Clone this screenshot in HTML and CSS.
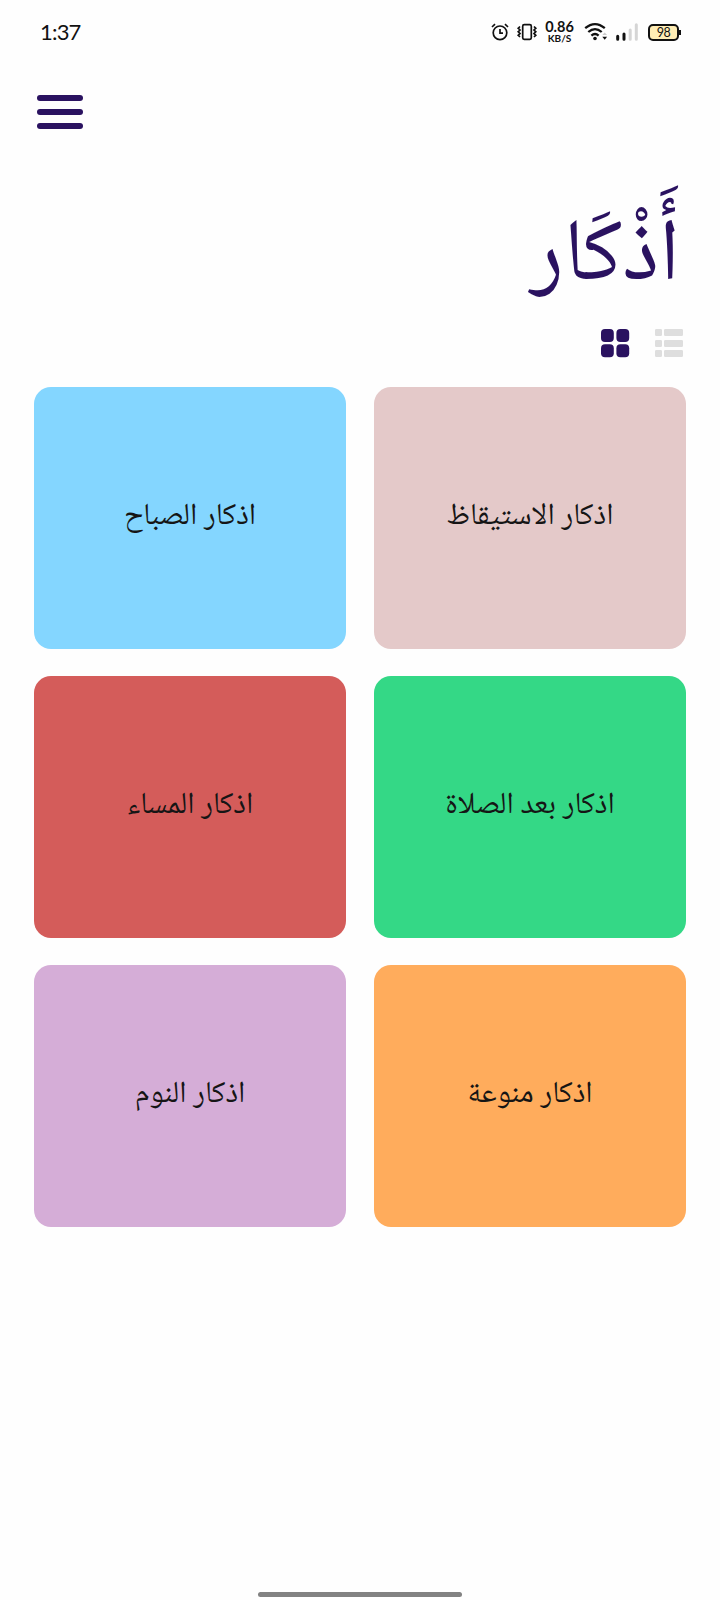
FILE: index.html
```html
<!DOCTYPE html>
<html lang="ar">
<head>
  <meta charset="utf-8">
  <title>أذكار</title>
  <link rel="stylesheet" href="styles.css">
</head>
<body>
  <div class="status-bar">
    <span class="time">1:37</span>
    <div class="status-icons">
      <svg class="alarm" width="18" height="18" viewBox="0 0 18 18">
        <circle cx="9" cy="9.8" r="6.8"/>
        <path d="M9 6v4.2h3M1 4l3-2.8M17 4l-3-2.8"/>
      </svg>
      <svg class="vibrate" width="20" height="18" viewBox="0 0 20 18">
        <rect x="5.7" y="1.7" width="8.6" height="14.6" rx="1.5"/>
        <path d="M3 3.5L1.2 5.3 3 7 1.2 8.8 3 10.5 1.2 12.3 3 14M17 3.5l1.8 1.8L17 7l1.8 1.8L17 10.5l1.8 1.8L17 14"/>
      </svg>
      <div class="speed">
        <span class="rate">0.86</span>
        <span class="unit">KB/S</span>
      </div>
      <svg class="wifi" width="24" height="18" viewBox="0 0 24 18">
        <path d="M1.2 5.2Q11 -3 20.8 5.2M4.3 9Q11 3.2 17.7 9M7.4 12.6Q11 9.4 14.6 12.6"/>
        <circle class="fill" cx="11" cy="15.5" r="1.8"/>
        <path class="faint" d="M18.3 12l2.4-2.4 2.4 2.4z"/>
        <path class="fill" d="M18.3 13.8h4.8l-2.4 3z"/>
      </svg>
      <svg class="signal" width="22" height="18" viewBox="0 0 22 18">
        <path d="M1.7 13.3v3M8 11v5.3"/>
        <path class="weak" d="M14.2 7v9.3M20.3 1.7v14.6"/>
      </svg>
      <div class="battery">98</div>
    </div>
  </div>

  <header>
    <button class="menu" aria-label="القائمة">
      <span></span>
      <span></span>
      <span></span>
    </button>
  </header>

  <main dir="rtl">
    <h1>أَذْكَار</h1>

    <div class="views">
      <svg class="list" width="28" height="28" viewBox="0 0 28 28">
        <rect width="7" height="7" rx="1.2"/>
        <rect x="9" width="19" height="7" rx="1.2"/>
        <rect y="11" width="7" height="7" rx="1.2"/>
        <rect x="9" y="11" width="19" height="7" rx="1.2"/>
        <rect y="21" width="7" height="7" rx="1.2"/>
        <rect x="9" y="21" width="19" height="7" rx="1.2"/>
      </svg>
      <svg class="tiles" width="28" height="28" viewBox="0 0 28 28">
        <rect width="12.8" height="13" rx="4"/>
        <rect x="15.4" width="12.8" height="13" rx="4"/>
        <rect y="15.2" width="12.8" height="13" rx="4"/>
        <rect x="15.4" y="15.2" width="12.8" height="13" rx="4"/>
      </svg>
    </div>

    <div class="grid">
      <a class="card waking">اذكار الاستيقاظ</a>
      <a class="card morning">اذكار الصباح</a>
      <a class="card prayer">اذكار بعد الصلاة</a>
      <a class="card evening">اذكار المساء</a>
      <a class="card various">اذكار منوعة</a>
      <a class="card sleep">اذكار النوم</a>
    </div>
  </main>

  <div class="home-bar"></div>
</body>
</html>
```
FILE: styles.css
```css
* {
  box-sizing: border-box;
}

body {
  margin: 0;
  height: 1600px;
  display: flex;
  flex-direction: column;
  background-color: #fefefe;
  font-family: "Noto Naskh Arabic", "Noto Sans Arabic", "Noto Sans", sans-serif;
  overflow: hidden;
}

svg {
  display: block;
  overflow: visible;
}

.status-bar {
  height: 64px;
  padding: 0 41px 0 40px;
  display: flex;
  align-items: center;
  justify-content: space-between;
  color: #111;
}

.time {
  padding-bottom: 2px;
  font: 22px Lato, sans-serif;
  letter-spacing: -0.8px;
}

.status-icons {
  display: flex;
  align-items: center;
}

.status-icons svg {
  fill: none;
  stroke: #111;
  stroke-width: 1.7;
}

.status-icons .fill {
  fill: #111;
  stroke: none;
}

.status-icons .faint {
  fill: #ccc;
  stroke: none;
}

.vibrate {
  margin-left: 8px;
}

.speed {
  width: 31px;
  margin-left: 7px;
  display: flex;
  flex-direction: column;
  align-items: center;
  font-family: Lato, sans-serif;
  font-weight: bold;
}

.rate {
  font-size: 14.5px;
  line-height: 12px;
}

.unit {
  font-size: 10px;
  line-height: 10px;
}

.wifi {
  margin-left: 9px;
}

.status-icons .wifi {
  stroke-width: 2.3;
}

.signal {
  margin-left: 8px;
}

.status-icons .signal {
  stroke-width: 3;
  stroke-linecap: round;
}

.signal .weak {
  stroke: #d5d5d5;
}

.battery {
  position: relative;
  width: 31px;
  height: 17px;
  margin-left: 10px;
  border: 2px solid #111;
  border-radius: 5px;
  background-color: #ffedb5;
  font: 12.5px/13px Lato, sans-serif;
  letter-spacing: -0.5px;
  text-align: center;
}

.battery::after {
  content: "";
  position: absolute;
  right: -4px;
  top: 4px;
  width: 2px;
  height: 5px;
  background-color: #111;
}

header {
  height: 96px;
  padding: 31px 37px 0;
}

.menu {
  width: 46px;
  padding: 0;
  border: none;
  background: none;
  display: flex;
  flex-direction: column;
  gap: 8px;
}

.menu span {
  width: 100%;
  height: 6px;
  border-radius: 3px;
  background-color: #2a1260;
}

main {
  padding: 0 34px;
}

h1 {
  height: 169px;
  margin: 0;
  padding: 31px 6px 0;
  display: flex;
  align-items: center;
  color: #2a1260;
  font-size: 88px;
  font-weight: normal;
  line-height: 1;
}

.views {
  height: 58px;
  padding-right: 3px;
  display: flex;
  gap: 26px;
}

.list {
  fill: #dedede;
}

.tiles {
  fill: #2a1260;
}

.grid {
  display: grid;
  grid-template-columns: 1fr 1fr;
  grid-auto-rows: 262px;
  gap: 27px 28px;
}

.card {
  padding-bottom: 2px;
  display: flex;
  align-items: center;
  justify-content: center;
  border-radius: 17px;
  color: #151515;
  font-size: 30.5px;
}

.waking {
  background-color: #e4c9c9;
}

.morning {
  background-color: #84d6ff;
}

.prayer {
  background-color: #34d886;
}

.evening {
  background-color: #d45c5a;
}

.various {
  background-color: #ffac5c;
}

.sleep {
  background-color: #d5add7;
}

.home-bar {
  width: 204px;
  height: 5px;
  margin: auto auto 3px;
  border-radius: 3px;
  background-color: #828282;
}
```
